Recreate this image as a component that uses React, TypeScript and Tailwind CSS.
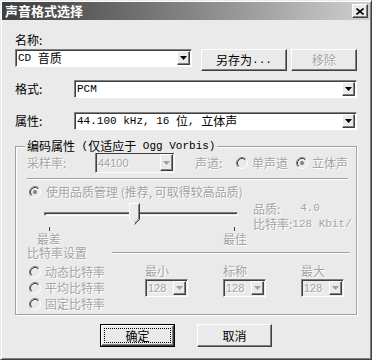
import React from "react";

const raised =
  "border border-t-white border-l-white border-r-[#404040] border-b-[#404040] shadow-[inset_-1px_-1px_0_#808080]";
const sunken =
  "border border-t-[#808080] border-l-[#808080] border-r-white border-b-white shadow-[inset_1px_1px_0_#404040]";
const dim = "text-[#a4a4a4] [text-shadow:1px_1px_0_#ffffff]";

function Lat({ children }: { children: React.ReactNode }) {
  return <span className="font-['Liberation_Mono',monospace] text-[11px] leading-none whitespace-pre">{children}</span>;
}

function Arrow({ disabled }: { disabled?: boolean }) {
  return (
    <div className={`${raised} w-[13px] self-stretch m-[1px] flex items-center justify-center bg-[#eaeaea]`}>
      <svg width="7" height="4" viewBox="0 0 7 4">
        <polygon points="0,0 7,0 3.5,4" fill={disabled ? "#a0a0a0" : "#000"} />
      </svg>
    </div>
  );
}

function Combo({
  className,
  value,
  disabled,
}: {
  className: string;
  value: React.ReactNode;
  disabled?: boolean;
}) {
  return (
    <div className={`${sunken} ${className} flex items-stretch ${disabled ? "bg-[#eaeaea]" : "bg-white"}`}>
      <div className={`flex-1 flex items-center pl-[2px] whitespace-nowrap overflow-hidden ${disabled ? dim : ""}`}>
        {value}
      </div>
      <Arrow disabled={disabled} />
    </div>
  );
}

function Radio({ checked }: { checked?: boolean }) {
  return (
    <svg width="12" height="12" viewBox="0 0 12 12" className="shrink-0 block">
      <circle cx="6" cy="6" r="5" fill="#eaeaea" />
      <path d="M2.11 9.89 A5.5 5.5 0 0 1 9.89 2.11" stroke="#808080" fill="none" />
      <path d="M9.89 2.11 A5.5 5.5 0 0 1 2.11 9.89" stroke="#ffffff" fill="none" />
      <path d="M2.82 9.18 A4.5 4.5 0 0 1 9.18 2.82" stroke="#404040" fill="none" />
      {checked && <circle cx="6" cy="6" r="2" fill="#808080" />}
    </svg>
  );
}

function Sep({ className }: { className: string }) {
  return <div className={`h-[2px] border-t border-t-[#a0a0a0] border-b border-b-white ${className}`} />;
}

export default function App() {
  return (
    <div className="w-[372px] h-[360px] bg-[#eaeaea] border border-t-[#eaeaea] border-l-[#eaeaea] border-r-[#404040] border-b-[#404040] shadow-[inset_1px_1px_0_white,inset_-1px_-1px_0_#808080] p-[1px] font-['Noto_Sans_CJK_SC',sans-serif] text-[12px] leading-[14px] text-black flex flex-col overflow-hidden">
      {/* title bar */}
      <div className="h-[18px] shrink-0 bg-gradient-to-r from-[#3e3e3e] to-[#d0d0d0] flex items-center pl-[3px] pr-[2px]">
        <span className="text-white font-bold text-[13px] leading-[16px] flex-1">声音格式选择</span>
        <div className={`${raised} bg-[#eaeaea] w-[16px] h-[14px] flex items-center justify-center`}>
          <svg width="8" height="7" viewBox="0 0 8 7">
            <path d="M0.5 0.5 L7.5 6.5 M7.5 0.5 L0.5 6.5" stroke="#000" strokeWidth="1.6" />
          </svg>
        </div>
      </div>

      <div className="px-[13px] flex flex-col">
        <div className="mt-[13px] h-[14px]">名称:</div>

        <div className="mt-[2px] h-[22px] flex items-start">
          <Combo className="w-[177px] h-[18px]" value={<><Lat>CD </Lat>音质</>} />
          <button className={`${raised} ml-[9px] w-[86px] h-[22px] bg-[#eaeaea] flex items-center justify-center`}>
            另存为<Lat>...</Lat>
          </button>
          <button className={`${raised} ml-[4px] w-[66px] h-[22px] bg-[#eaeaea] flex items-center justify-center ${dim}`}>
            移除
          </button>
        </div>

        <div className="mt-[9px] h-[18px] flex items-center">
          <div className="w-[59px]">格式:</div>
          <Combo className="flex-1 h-[18px]" value={<Lat>PCM</Lat>} />
        </div>

        <div className="mt-[14px] h-[18px] flex items-center">
          <div className="w-[59px]">属性:</div>
          <Combo className="flex-1 h-[18px]" value={<><Lat>44.100 kHz, 16 </Lat>位<Lat>, </Lat>立体声</>} />
        </div>

        {/* group box */}
        <div className="mt-[16px] relative border border-[#a0a0a0] shadow-[inset_1px_1px_0_white,1px_1px_0_white] pt-[5px] pl-[11px] pb-[2px]">
          <div className="absolute left-[9px] -top-[8px] px-[2px] h-[14px] bg-[#eaeaea] flex items-center whitespace-pre">
            编码属性<Lat> (</Lat>仅适应于<Lat> Ogg Vorbis)</Lat>
          </div>
          <div className="flex flex-col">
            <div className="h-[21px] flex items-center">
              <div className={`w-[68px] ${dim}`}>采样率:</div>
              <Combo
                className="w-[80px] h-[21px]"
                disabled
                value={<span className="font-['Liberation_Sans',sans-serif] text-[11px]">44100</span>}
              />
              <div className={`ml-[20px] w-[41px] ${dim}`}>声道:</div>
              <Radio />
              <span className={`ml-[4px] ${dim}`}>单声道</span>
              <span className="ml-[8px]"><Radio checked /></span>
              <span className={`ml-[4px] ${dim}`}>立体声</span>
            </div>

            <Sep className="mt-[5px] w-[321px]" />

            <div className="mt-[5px] h-[14px] flex items-center">
              <span className="ml-[2px]"><Radio checked /></span>
              <span className={`ml-[5px] ${dim}`}>使用品质管理 (推荐, 可取得较高品质)</span>
            </div>

            <div className="mt-[2px] h-[31px] flex">
              <div className="relative w-[226px] h-[31px]">
                <div className="absolute left-[17px] top-[11px] w-[194px] h-[4px] border border-t-[#808080] border-l-[#808080] border-r-white border-b-white shadow-[inset_1px_1px_0_#404040]" />
                <svg className="absolute left-[102px] top-[2px]" width="11" height="22" viewBox="0 0 11 22">
                  <path d="M0.5 16.5 V0.5 H10.5 V16.5 L5.5 21.5 Z" fill="#eaeaea" />
                  <path d="M0.5 16.5 V0.5 H9.5" stroke="#fff" fill="none" />
                  <path d="M10.5 0.5 V16.5 L5.5 21.5" stroke="#404040" fill="none" />
                  <path d="M9.5 1.5 V16 L5.5 20" stroke="#808080" fill="none" />
                  <path d="M0.5 16.5 L5 21" stroke="#fff" fill="none" />
                </svg>
                <div className="absolute left-[22px] top-[26px] w-px h-[4px] bg-[#404040]" />
                <div className="absolute left-[207px] top-[26px] w-px h-[4px] bg-[#404040]" />
              </div>
              <div className={`flex flex-col ${dim}`}>
                <div className="h-[16px] flex items-center">品质:<Lat>   4.0</Lat></div>
                <div className="h-[16px] flex items-center">比特率:<Lat>128 Kbit/</Lat></div>
              </div>
            </div>

            <div className={`h-[13px] leading-[13px] flex ${dim}`}>
              <span className="ml-[10px]">最差</span>
              <span className="ml-[162px]">最佳</span>
            </div>

            <div className="h-[14px] mt-[1px] flex items-center">
              <span className={dim}>比特率设置</span>
              <Sep className="ml-[25px] w-[238px]" />
            </div>

            <div className="mt-[4px] flex">
              <div className="w-[118px] flex flex-col">
                {["动态比特率", "平均比特率", "固定比特率"].map((t) => (
                  <div key={t} className="h-[16px] flex items-center">
                    <span className="ml-[2px]"><Radio /></span>
                    <span className={`ml-[4px] ${dim}`}>{t}</span>
                  </div>
                ))}
              </div>
              {["最小", "标称", "最大"].map((t, i) => (
                <div key={t} className={`w-[43px] flex flex-col ${i > 0 ? "ml-[35px]" : ""}`}>
                  <span className={`h-[14px] ${dim}`}>{t}</span>
                  <Combo
                    className="mt-[1px] h-[18px]"
                    disabled
                    value={<span className="font-['Liberation_Sans',sans-serif] text-[11px]">128</span>}
                  />
                </div>
              ))}
            </div>
          </div>
        </div>

        <div className="mt-[9px] flex">
          <div className="ml-[85px] w-[75px] h-[23px] border border-black">
            <button className={`${raised} w-full h-full bg-[#eaeaea] p-[2px]`}>
              <div className="w-full h-full border border-dotted border-black flex items-center justify-center">确定</div>
            </button>
          </div>
          <button className={`${raised} ml-[22px] w-[75px] h-[23px] bg-[#eaeaea] flex items-center justify-center`}>
            取消
          </button>
        </div>
      </div>
    </div>
  );
}
